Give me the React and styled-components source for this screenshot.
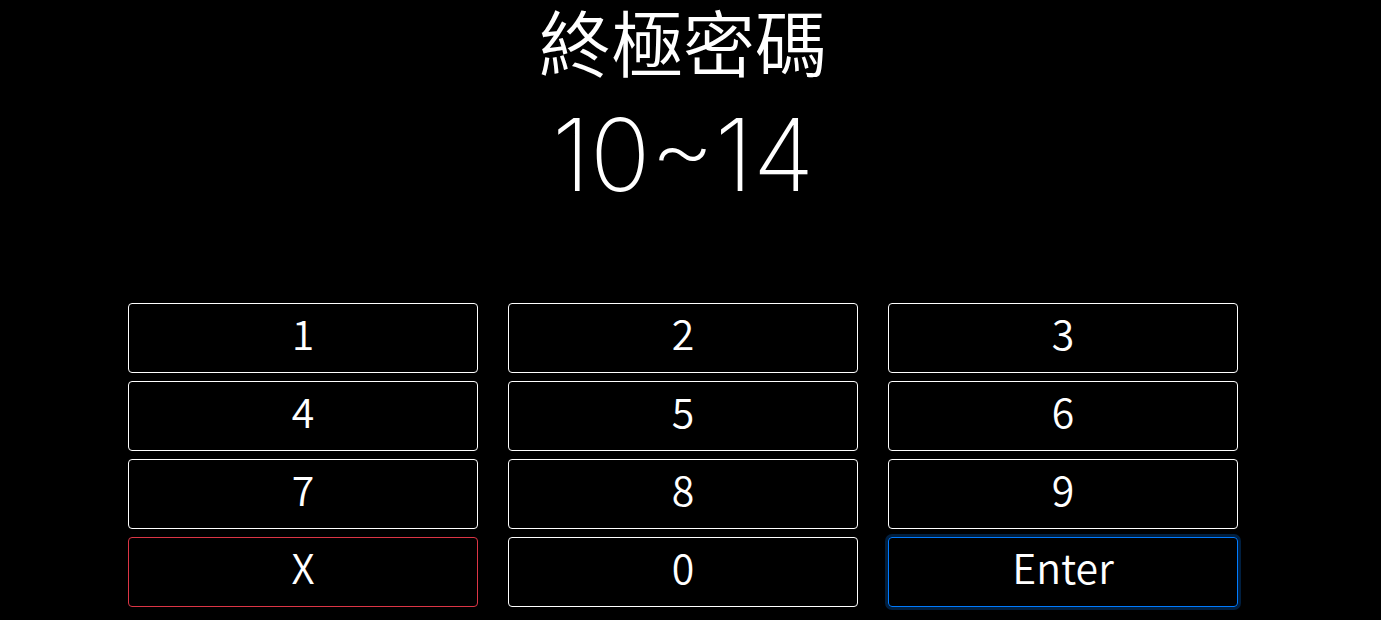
import React from "react";
import styled, { createGlobalStyle } from "styled-components";

const GlobalStyle = createGlobalStyle`
  *, *::before, *::after { box-sizing: border-box; }
  body {
    margin: 0;
    padding-right: 15px;
    background: #000;
    color: #fff;
    font-family: "Noto Sans CJK TC", sans-serif;
    font-weight: 350;
  }
`;

const Page = styled.main`
  max-width: 1140px;
  margin: 0 auto;
  padding: 0 15px 12px;
  text-align: center;
`;

const Title = styled.h1`
  margin: 0;
  font-size: 72px;
  font-weight: 350;
  line-height: 80px;
`;

const Range = styled.p`
  margin: 0;
  font-family: Inter, sans-serif;
  font-size: 100px;
  font-weight: 230;
  line-height: 150px;
`;

const Keypad = styled.div`
  display: grid;
  grid-template-columns: repeat(3, 1fr);
  gap: 8px 30px;
  margin-top: 73px;
`;

const tones = { plain: "#fff", danger: "#dc3545", primary: "#007bff" };

const Key = styled.button`
  height: 70px;
  padding: 0 0 12px;
  border: 1px solid ${({ $tone }) => tones[$tone]};
  border-radius: 4px;
  background: transparent;
  color: #fff;
  font-family: inherit;
  font-size: 41px;
  font-weight: 350;
  line-height: 56px;
  cursor: pointer;
  outline: 0;
  box-shadow: ${({ $active }) => ($active ? "0 0 0 3px rgba(0, 123, 255, 0.25)" : "none")};
`;

const keys = ["1", "2", "3", "4", "5", "6", "7", "8", "9", "X", "0", "Enter"];
const toneOf = (label) =>
  label === "X" ? "danger" : label === "Enter" ? "primary" : "plain";

export default function App() {
  return (
    <>
      <GlobalStyle />
      <Page>
        <Title>終極密碼</Title>
        <Range>10~14</Range>
        <Keypad>
          {keys.map((label) => (
            <Key key={label} type="button" $tone={toneOf(label)} $active={label === "Enter"}>
              {label}
            </Key>
          ))}
        </Keypad>
      </Page>
    </>
  );
}
